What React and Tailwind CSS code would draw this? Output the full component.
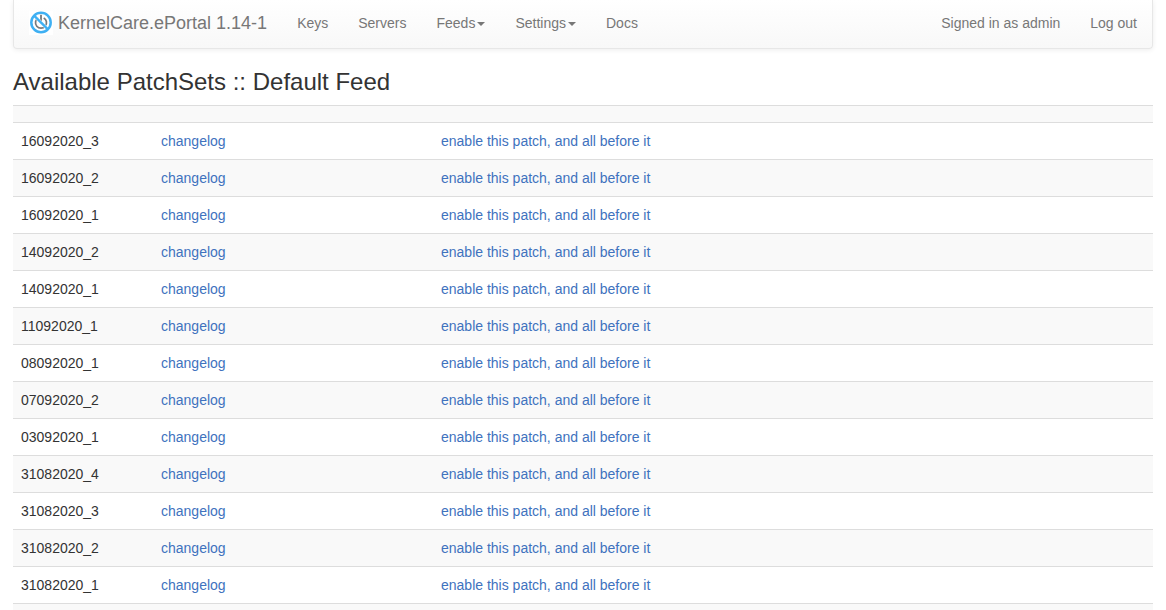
const patchSets = [
  "16092020_3",
  "16092020_2",
  "16092020_1",
  "14092020_2",
  "14092020_1",
  "11092020_1",
  "08092020_1",
  "07092020_2",
  "03092020_1",
  "31082020_4",
  "31082020_3",
  "31082020_2",
  "31082020_1",
];

function Logo() {
  return (
    <svg viewBox="0 0 24 24" className="mr-[5px] size-6 bg-white" aria-hidden="true">
      <path d="M9.3 6.9a5.5 5.5 0 1 0 5.4 0" fill="none" stroke="#77797b" strokeWidth="1.7" />
      <path d="M12 3.8v7.6" stroke="#77797b" strokeWidth="1.8" />
      <path d="M4.8 4.3l14.4 14.4" stroke="#fff" strokeWidth="3.2" />
      <path d="M4.8 4.3l14.4 14.4" stroke="#3fb0f3" strokeWidth="2.4" />
      <circle cx="12" cy="11.5" r="9.7" fill="none" stroke="#3fb0f3" strokeWidth="2.5" />
    </svg>
  );
}

function NavLink({ children }) {
  return (
    <a href="#" className="block px-[15px] hover:text-[#333]">
      {children}
    </a>
  );
}

function NavMenu({ children }) {
  return (
    <button type="button" aria-haspopup="true" className="flex items-center px-[15px] hover:text-[#333]">
      {children}
      <svg viewBox="0 0 8 4" className="mt-px ml-0.5 h-1 w-2" aria-hidden="true">
        <path d="M0 0h8L4 4z" fill="currentColor" />
      </svg>
    </button>
  );
}

function EmptyRow() {
  return (
    <tr className="border-t border-[#ddd] odd:bg-[#f9f9f9]">
      <td className="p-2" />
      <td className="p-2" />
      <td className="p-2" />
    </tr>
  );
}

export default function App() {
  return (
    <div className="bg-white px-[13px] font-['Liberation_Sans',Arial,sans-serif] text-sm leading-5 text-[#333]">
      <nav className="flex items-center rounded-b border border-t-0 border-[#e7e7e7] bg-linear-to-b from-white to-[#f8f8f8] pt-[11px] pb-[13px] text-[#777] shadow-[0_1px_5px_rgba(0,0,0,0.075)]">
        <a href="#" className="flex items-center px-[15px] text-lg leading-6">
          <Logo />
          KernelCare.ePortal 1.14-1
        </a>
        <NavLink>Keys</NavLink>
        <NavLink>Servers</NavLink>
        <NavMenu>Feeds</NavMenu>
        <NavMenu>Settings</NavMenu>
        <NavLink>Docs</NavLink>
        <div className="ml-auto flex items-center">
          <span className="px-[15px]">Signed in as admin</span>
          <NavLink>Log out</NavLink>
        </div>
      </nav>
      <main>
        <h1 className="mt-5 mb-[10px] text-2xl leading-[26px]">Available PatchSets :: Default Feed</h1>
        <table className="w-full table-fixed border-collapse">
          <colgroup>
            <col className="w-[140px]" />
            <col className="w-[280px]" />
            <col />
          </colgroup>
          <tbody>
            <EmptyRow />
            {patchSets.map((name) => (
              <tr key={name} className="border-t border-[#ddd] odd:bg-[#f9f9f9]">
                <td className="p-2">{name}</td>
                <td className="p-2">
                  <a href="#" className="text-[#4072be] hover:underline">changelog</a>
                </td>
                <td className="p-2">
                  <a href="#" className="text-[#4072be] hover:underline">enable this patch, and all before it</a>
                </td>
              </tr>
            ))}
            <EmptyRow />
          </tbody>
        </table>
      </main>
    </div>
  );
}
